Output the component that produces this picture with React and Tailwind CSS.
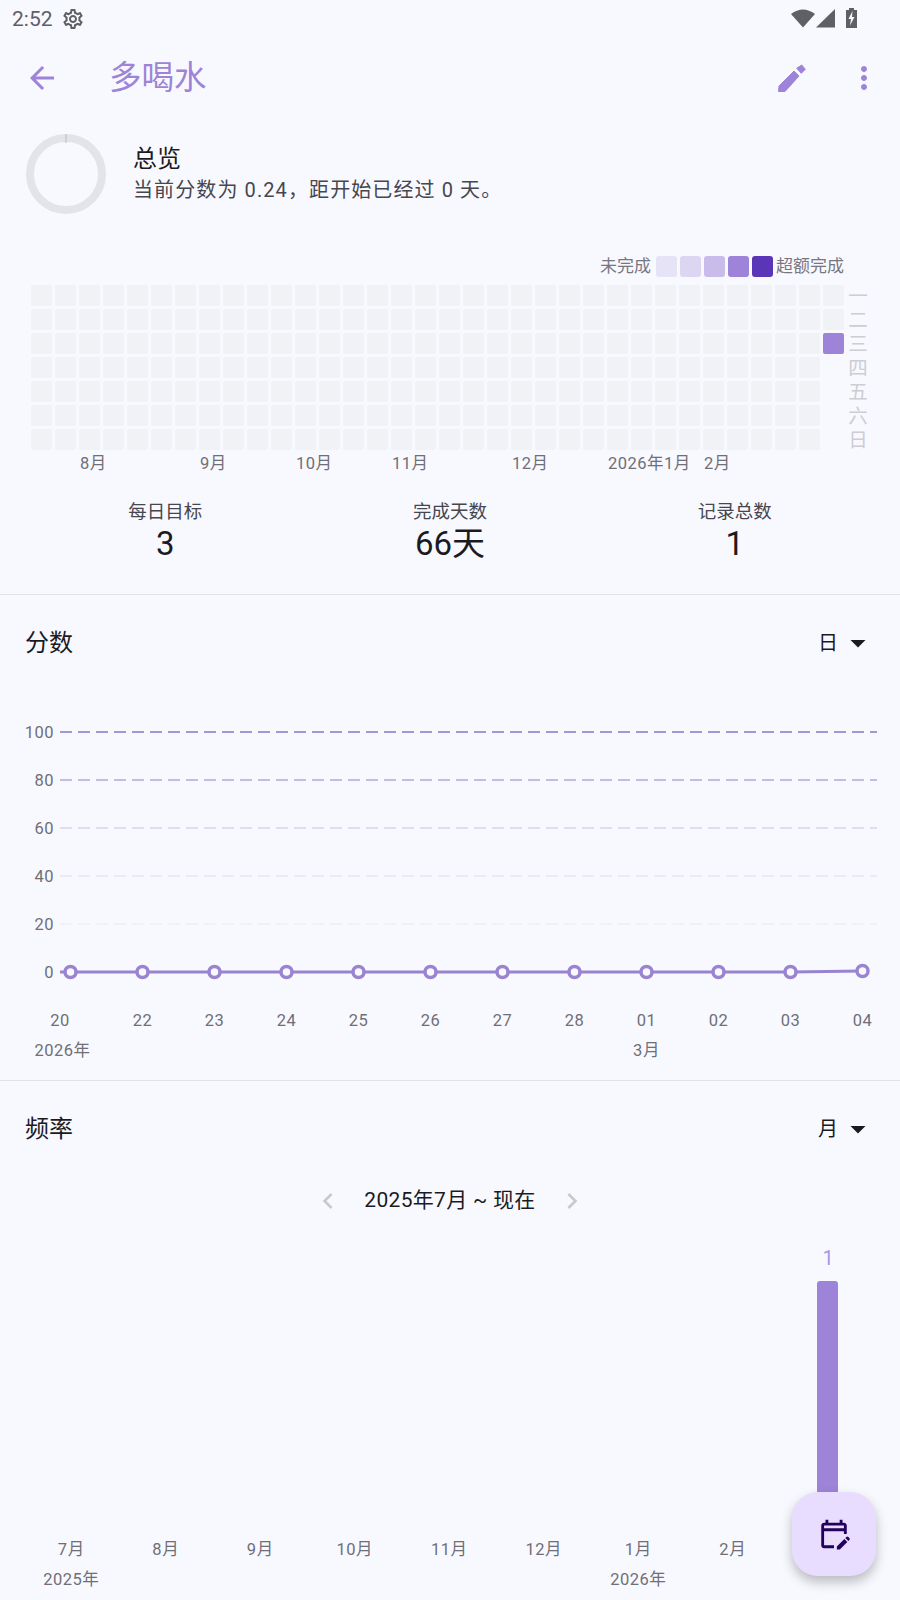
import React from 'react';
import { MdArrowBack, MdMoreVert, MdOutlineSettings, MdChevronLeft, MdChevronRight, MdArrowDropDown, MdOutlineEditCalendar } from 'react-icons/md';

const COLS = 34;
const legendColors = ['bg-[#e6e3f6]', 'bg-[#dcd6f2]', 'bg-[#c9bceb]', 'bg-[#9d84d9]', 'bg-[#5a35b8]'];
const weekdays = ['一', '二', '三', '四', '五', '六', '日'];
const scoreTicks = ['100', '80', '60', '40', '20', '0'];
const scoreDays = ['20', '22', '23', '24', '25', '26', '27', '28', '01', '02', '03', '04'];
const freqMonths = ['7月', '8月', '9月', '10月', '11月', '12月', '1月', '2月', ''];
const gridLines = [
  { y: 9, stroke: '#a596d8', w: 2 },
  { y: 57, stroke: '#c5bce6', w: 2 },
  { y: 105, stroke: '#e0ddf1', w: 2 },
  { y: 153, stroke: '#ebebf3', w: 2 },
  { y: 201, stroke: '#f0f0f6', w: 2 },
];
const dotX = [10.5, 82.5, 154.5, 226.5, 298.5, 370.5, 442.5, 514.5, 586.5, 658.5, 730.5, 802.5];

const cellClass = (col, row) => {
  if (col === COLS - 1) {
    if (row === 2) return 'bg-[#9d84d9]';
    if (row > 2) return '';
  }
  return 'bg-[#f1f2f6]';
};

const StatusBar = () => (
  <div className="flex h-[38px] items-center justify-between pl-[12px] pr-[39px] text-[#5f6065]">
    <div className="flex items-center gap-[8px]">
      <span className="text-[21px] leading-none">2:52</span>
      <MdOutlineSettings className="h-[24px] w-[24px]" />
    </div>
    <svg width="70" height="20" viewBox="0 0 70 20" fill="#5f6065" className="mb-[2px]">
      <path d="M0 6 Q12 -3 24 6 L12 19.5 Z" />
      <path d="M25 19.5 L44 1 V19.5 Z" />
      <path fillRule="evenodd" d="M55 2h3V0h5v2h3v18H55z M61.5 3 L57.5 11 H60 L59 17.5 L63.5 9 H61 Z" />
    </svg>
  </div>
);

const AppBar = () => (
  <div className="flex h-[80px] items-center text-[#9d84d9]">
    <div className="flex w-[109px] pl-[24px]">
      <MdArrowBack className="h-[36px] w-[36px]" />
    </div>
    <h1 className="flex-1 text-[32.5px] leading-none">多喝水</h1>
    <svg width="33" height="33" viewBox="0 0 33 33" fill="#9d84d9" stroke="#9d84d9" strokeLinejoin="round" strokeWidth="1">
      <path d="M4 24 19 9 24 14 10 29.5 3.5 29.5Z" />
      <path d="M21.7 6.3 26.7 3 30.3 7.3 26.3 11.3Z" />
    </svg>
    <MdMoreVert className="ml-[38px] mr-[18px] h-[36px] w-[36px]" />
  </div>
);

const Overview = () => (
  <div className="mt-[16px] flex items-center pl-[26px]">
    <svg width="80" height="80" viewBox="0 0 80 80">
      <circle cx="40" cy="40" r="36" fill="none" stroke="#e3e4e9" strokeWidth="8" />
      <line x1="40" y1="0" x2="40" y2="9" stroke="#b9b9c0" strokeWidth="1" />
    </svg>
    <div className="ml-[27px]">
      <div className="text-[24px] leading-[32px] text-[#1b1b1f]">总览</div>
      <div className="text-[20px] leading-[31px] tracking-[1.1px] text-[#46464f]">当前分数为 0.24，距开始已经过 0 天。</div>
    </div>
  </div>
);

const Heatmap = () => (
  <div className="mt-[42px] pl-[31px]">
    <div className="flex h-[21px] items-center justify-end gap-[3px] pr-[56px] text-[17px] leading-none text-[#77777f]">
      <span className="mr-[2px]">未完成</span>
      {legendColors.map((c) => (
        <span key={c} className={`h-[21px] w-[21px] rounded-[3px] ${c}`} />
      ))}
      <span>超额完成</span>
    </div>
    <div className="mt-[8px] flex">
      <div className="grid grid-cols-[repeat(34,21px)] grid-rows-[repeat(7,21px)] gap-[3px] [grid-auto-flow:column]">
        {Array.from({ length: COLS * 7 }, (_, i) => {
          const col = Math.floor(i / 7);
          const row = i % 7;
          return <span key={i} className={`rounded-[2px] ${cellClass(col, row)}`} />;
        })}
      </div>
      <div className="ml-[4px] flex w-[20px] flex-col text-[19.5px] leading-[24px] text-[#cdcdd3]">
        {weekdays.map((d) => (
          <span key={d} className="h-[24px] text-center">{d}</span>
        ))}
      </div>
    </div>
    <div className="mt-[1px] grid grid-cols-[repeat(34,24px)] whitespace-nowrap pl-[1px] text-[16.5px] leading-[20px] tracking-[0.5px] text-[#6f6f77]">
      <span className="col-start-3">8月</span>
      <span className="col-start-8">9月</span>
      <span className="col-start-12">10月</span>
      <span className="col-start-[16]">11月</span>
      <span className="col-start-[21]">12月</span>
      <span className="col-start-[25]">2026年1月</span>
      <span className="col-start-[29]">2月</span>
    </div>
  </div>
);

const Stat = ({ label, value }) => (
  <div className="text-center">
    <div className="text-[18.5px] leading-[23px] text-[#46464f]">{label}</div>
    <div className="text-[33px] leading-[40px] text-[#1b1b1f]">{value}</div>
  </div>
);

const SectionHeader = ({ title, value, className }) => (
  <div className={`flex items-center justify-between pl-[25px] pr-[24px] ${className}`}>
    <span className="text-[24px] leading-none text-[#1b1b1f]">{title}</span>
    <span className="flex items-center text-[20px] leading-none text-[#1b1b1f]">
      {value}
      <MdArrowDropDown className="ml-[2px] h-[36px] w-[36px]" />
    </span>
  </div>
);

const ScoreChart = () => (
  <div className="mt-[62px]">
    <div className="flex">
      <div className="flex w-[54px] flex-col items-end text-[16.5px] leading-[20px] tracking-[0.5px] text-[#6f6f77]">
        {scoreTicks.map((t) => (
          <span key={t} className="mb-[28px] h-[20px] last:mb-0">{t}</span>
        ))}
      </div>
      <svg width="817" height="262" viewBox="0 0 817 262" className="ml-[6px] shrink-0 overflow-visible">
        {gridLines.map((l) => (
          <line key={l.y} x1="0" x2="817" y1={l.y} y2={l.y} stroke={l.stroke} strokeWidth={l.w} strokeDasharray="12 6" />
        ))}
        <polyline points="0,249 730.5,249 802.5,248" fill="none" stroke="#9a84d2" strokeWidth="3" />
        {dotX.map((x, i) => (
          <circle key={x} cx={x} cy={i === 11 ? 248 : 249} r="5.5" fill="#f8f9ff" stroke="#9a84d2" strokeWidth="3.5" />
        ))}
      </svg>
    </div>
  </div>
);

const ScoreAxis = () => (
  <div className="mt-[26px] pl-[34.5px]">
    <div className="grid grid-cols-[repeat(12,72px)] text-center text-[16.5px] leading-[20px] tracking-[0.5px] text-[#6f6f77]">
      {scoreDays.map((d, i) => (
        <span key={d + 'x'} className={i === 0 ? 'pr-[21px]' : ''}>{d}</span>
      ))}
    </div>
    <div className="mt-[10px] grid grid-cols-[repeat(12,72px)] whitespace-nowrap text-center text-[16.5px] leading-[20px] tracking-[0.5px] text-[#6f6f77]">
      <span className="pr-[24px]">2026年</span>
      <span className="col-start-9">3月</span>
    </div>
  </div>
);

const FrequencyChart = () => (
  <div className="mt-[28px]">
    <div className="flex h-[35px] items-start justify-end pr-[52px]">
      <div className="flex w-[40px] justify-center text-[20px] leading-[24px] text-[#a898dc]">1</div>
    </div>
    <div className="flex h-[244px] justify-end pr-[62px]">
      <div className="h-full w-[21px] rounded-t-[3px] bg-[#9d84d9]" />
    </div>
    <div className="mt-[15px] grid grid-cols-[repeat(9,94.5px)] pl-[24px] text-center text-[16.5px] leading-[20px] tracking-[0.5px] text-[#6f6f77]">
      {freqMonths.map((m, i) => (
        <span key={i}>{m}</span>
      ))}
    </div>
    <div className="mt-[10px] grid grid-cols-[repeat(9,94.5px)] pl-[24px] text-center text-[16.5px] leading-[20px] tracking-[0.5px] text-[#6f6f77]">
      <span>2025年</span>
      <span className="col-start-7">2026年</span>
    </div>
  </div>
);

export default function App() {
  return (
    <div className="relative h-[1600px] w-[900px] overflow-hidden bg-[#f8f9ff] font-['Roboto','Noto_Sans_CJK_SC',sans-serif]">
      <StatusBar />
      <AppBar />
      <Overview />
      <Heatmap />

      <div className="mt-[27px] grid grid-cols-3 px-[23px]">
        <Stat label="每日目标" value="3" />
        <Stat label="完成天数" value="66天" />
        <Stat label="记录总数" value="1" />
      </div>

      <div className="mt-[30px] h-px bg-[#e1e1e8]" />
      <SectionHeader title="分数" value="日" className="mt-[30px]" />
      <ScoreChart />
      <ScoreAxis />

      <div className="mt-[19px] h-px bg-[#e1e1e8]" />
      <SectionHeader title="频率" value="月" className="mt-[30px]" />

      <div className="mt-[37px] flex h-[34px] items-center justify-center gap-[20px] text-[21px] tracking-[0.3px] text-[#1b1b1f]">
        <MdChevronLeft className="h-[32px] w-[32px] text-[#c8c8ce]" />
        <span className="w-[172px] whitespace-nowrap text-center">2025年7月 ~ 现在</span>
        <MdChevronRight className="h-[32px] w-[32px] text-[#c8c8ce]" />
      </div>

      <FrequencyChart />

      <div className="absolute left-[792px] top-[1492px] flex h-[84px] w-[84px] items-center justify-center rounded-[26px] bg-[#e9ddff] text-[#22005d] shadow-[0_6px_12px_rgba(0,0,0,0.25)]">
        <MdOutlineEditCalendar className="h-[34px] w-[34px]" />
      </div>
    </div>
  );
}
